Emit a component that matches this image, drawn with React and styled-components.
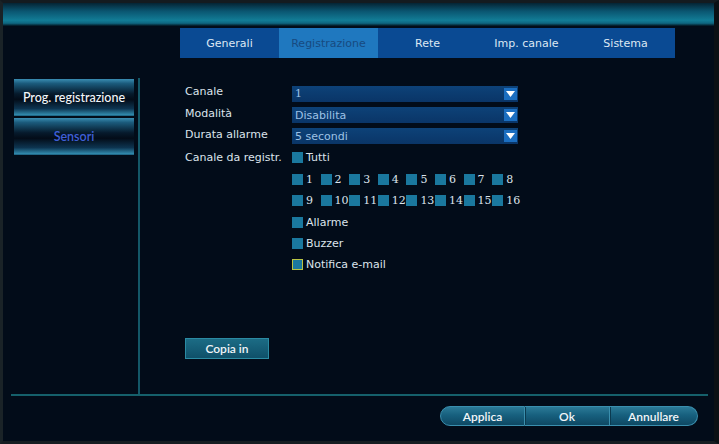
import React from "react";
import styled, { createGlobalStyle } from "styled-components";

const Global = createGlobalStyle`
  html, body { margin: 0; padding: 0; background: #11171c; }
  #root { width: 719px; height: 444px; }
  * { box-sizing: border-box; }
`;

const Frame = styled.div`
  width: 719px;
  height: 444px;
  background: #020c19;
  border-top: 3px solid #141b20;
  border-left: 3px solid #1a2327;
  border-right: 5px solid #0b1014;
  border-bottom: 3px solid #161d22;
  display: flex;
  flex-direction: column;
  font-family: "DejaVu Sans", Verdana, sans-serif;
`;

const TopBand = styled.div`
  height: 23px;
  flex: none;
  background: linear-gradient(
    to bottom,
    #052434 0%,
    #0a5570 35%,
    #127c96 75%,
    #0e6680 88%,
    #02121d 100%
  );
`;

const TabBar = styled.div`
  margin: 2px 0 0 177px;
  width: 495px;
  height: 30px;
  display: flex;
  background: #0a4a93;
`;

const Tab = styled.div`
  flex: 1;
  display: flex;
  align-items: center;
  justify-content: center;
  font-size: 11px;
  color: ${(p) => (p.$active ? "#174a80" : "#dde8f3")};
  background: ${(p) => (p.$active ? "#1f78bf" : "transparent")};
`;

const Body = styled.div`
  flex: 1;
  display: flex;
  flex-direction: column;
  padding: 0 6px 0 8px;
`;

const Main = styled.div`
  margin-top: 20px;
  height: 318px;
  display: grid;
  grid-template-columns: 129px 1fr;
  border-bottom: 2px solid #15606b;
`;

const Sidebar = styled.div`
  border-right: 2px solid #145868;
  padding: 1px 0 0 3px;
  display: flex;
  flex-direction: column;
  gap: 2px;
`;

const SideItem = styled.div`
  width: 120px;
  height: 37px;
  display: flex;
  align-items: center;
  justify-content: center;
  font-family: Lato, "Liberation Sans", Arial, sans-serif;
  font-size: 12.5px;
  font-weight: ${(p) => (p.$active ? 500 : 600)};
  color: ${(p) => (p.$active ? "#f2f6fa" : "#3f5fd6")};
  background: linear-gradient(
    to bottom,
    #3a8db2 0%,
    #1b5b7c 12%,
    #061a2c 40%,
    #030c18 55%,
    #0d3450 80%,
    #2f86a9 96%,
    #1a5a78 100%
  );
`;

const Content = styled.div`
  padding: 5px 0 0 45px;
  display: flex;
  flex-direction: column;
`;

const Form = styled.div`
  display: grid;
  grid-template-columns: 107px 226px;
  grid-auto-rows: 21.4px;
  align-items: center;
`;

const Label = styled.div`
  font-size: 11px;
  color: #dce4ec;
  margin-top: ${(p) => (p.$up ? "-4px" : "0")};
`;

const Select = styled.div`
  height: 16px;
  display: flex;
  align-items: center;
  justify-content: space-between;
  padding: 0 1px 0 3px;
  background: linear-gradient(to bottom, #0d4278 0%, #0a3567 100%);
  color: #9dc2e6;
  font-size: 11px;
  font-family: ${(p) => (p.$serif ? '"DejaVu Serif", serif' : '"DejaVu Sans", sans-serif')};
`;

const Arrow = styled.div`
  width: 13px;
  height: 12px;
  background: #1b6ec0;
  display: flex;
  align-items: center;
  justify-content: center;
`;

const Cell = styled.div`
  grid-column: ${(p) => (p.$span ? "2" : "auto")};
  display: flex;
  align-items: center;
`;

const CheckRow = styled.div`
  grid-column: 2;
  display: grid;
  grid-template-columns: repeat(8, 28.6px);
  align-items: center;
`;

const Check = styled.label`
  display: flex;
  align-items: center;
  gap: 3px;
  font-size: 11px;
  color: #dce4ec;
  font-family: ${(p) => (p.$serif ? '"DejaVu Serif", serif' : '"DejaVu Sans", sans-serif')};
`;

const Box = styled.span`
  width: 11px;
  height: 11px;
  flex: none;
  background: #1a789e;
  border: ${(p) => (p.$focus ? "1px solid #b9c443" : "none")};
`;

const CopyButton = styled.button`
  margin-top: auto;
  margin-bottom: 35px;
  width: 84px;
  height: 21px;
  border: 1px solid #2b8ba3;
  background: linear-gradient(to bottom, #1c6c85 0%, #0f5069 100%);
  color: #f0f4f8;
  font-family: Lato, "Liberation Sans", Arial, sans-serif;
  font-weight: 600;
  font-size: 12px;
  padding: 0;
`;

const Footer = styled.div`
  display: flex;
  justify-content: flex-end;
  padding: 10px 10px 0 0;
`;

const FootButton = styled.button`
  width: ${(p) => p.$w}px;
  height: 20px;
  padding: 0;
  border: 1px solid #3a8fae;
  border-left-width: ${(p) => (p.$first ? "1px" : "0")};
  border-radius: ${(p) =>
    p.$first ? "10px 0 0 10px" : p.$last ? "0 10px 10px 0" : "0"};
  background: linear-gradient(to bottom, #2b7a97 0%, #17607e 45%, #0e4863 100%);
  color: #f2f6f9;
  font-family: Lato, "Liberation Sans", sans-serif;
  font-weight: 600;
  font-size: 12px;
  box-shadow: ${(p) => (p.$first ? "none" : "inset 1px 0 0 #0b3a50")};
`;

const ArrowIcon = () => (
  <Arrow>
    <svg width="9" height="6" viewBox="0 0 9 6">
      <polygon points="0,0 9,0 4.5,6" fill="#ffffff" />
    </svg>
  </Arrow>
);

const tabs = ["Generali", "Registrazione", "Rete", "Imp. canale", "Sistema"];
const row1 = [1, 2, 3, 4, 5, 6, 7, 8];
const row2 = [9, 10, 11, 12, 13, 14, 15, 16];

export default function App() {
  return (
    <>
      <Global />
      <Frame>
        <TopBand />
        <TabBar>
          {tabs.map((t) => (
            <Tab key={t} $active={t === "Registrazione"}>
              {t}
            </Tab>
          ))}
        </TabBar>
        <Body>
          <Main>
            <Sidebar>
              <SideItem $active>Prog. registrazione</SideItem>
              <SideItem>Sensori</SideItem>
            </Sidebar>
            <Content>
              <Form>
                <Label $up>Canale</Label>
                <Select $serif>
                  <span>1</span>
                  <ArrowIcon />
                </Select>
                <Label $up>Modalità</Label>
                <Select>
                  <span>Disabilita</span>
                  <ArrowIcon />
                </Select>
                <Label $up>Durata allarme</Label>
                <Select>
                  <span>5 secondi</span>
                  <ArrowIcon />
                </Select>
                <Label>Canale da registr.</Label>
                <Cell>
                  <Check>
                    <Box />
                    Tutti
                  </Check>
                </Cell>
                <CheckRow>
                  {row1.map((n) => (
                    <Check key={n} $serif>
                      <Box />
                      {n}
                    </Check>
                  ))}
                </CheckRow>
                <CheckRow>
                  {row2.map((n) => (
                    <Check key={n} $serif>
                      <Box />
                      {n}
                    </Check>
                  ))}
                </CheckRow>
                <Cell $span>
                  <Check>
                    <Box />
                    Allarme
                  </Check>
                </Cell>
                <Cell $span>
                  <Check>
                    <Box />
                    Buzzer
                  </Check>
                </Cell>
                <Cell $span>
                  <Check>
                    <Box $focus />
                    Notifica e-mail
                  </Check>
                </Cell>
              </Form>
              <CopyButton>Copia in</CopyButton>
            </Content>
          </Main>
          <Footer>
            <FootButton $w={85} $first>
              Applica
            </FootButton>
            <FootButton $w={85}>Ok</FootButton>
            <FootButton $w={88} $last>
              Annullare
            </FootButton>
          </Footer>
        </Body>
      </Frame>
    </>
  );
}
